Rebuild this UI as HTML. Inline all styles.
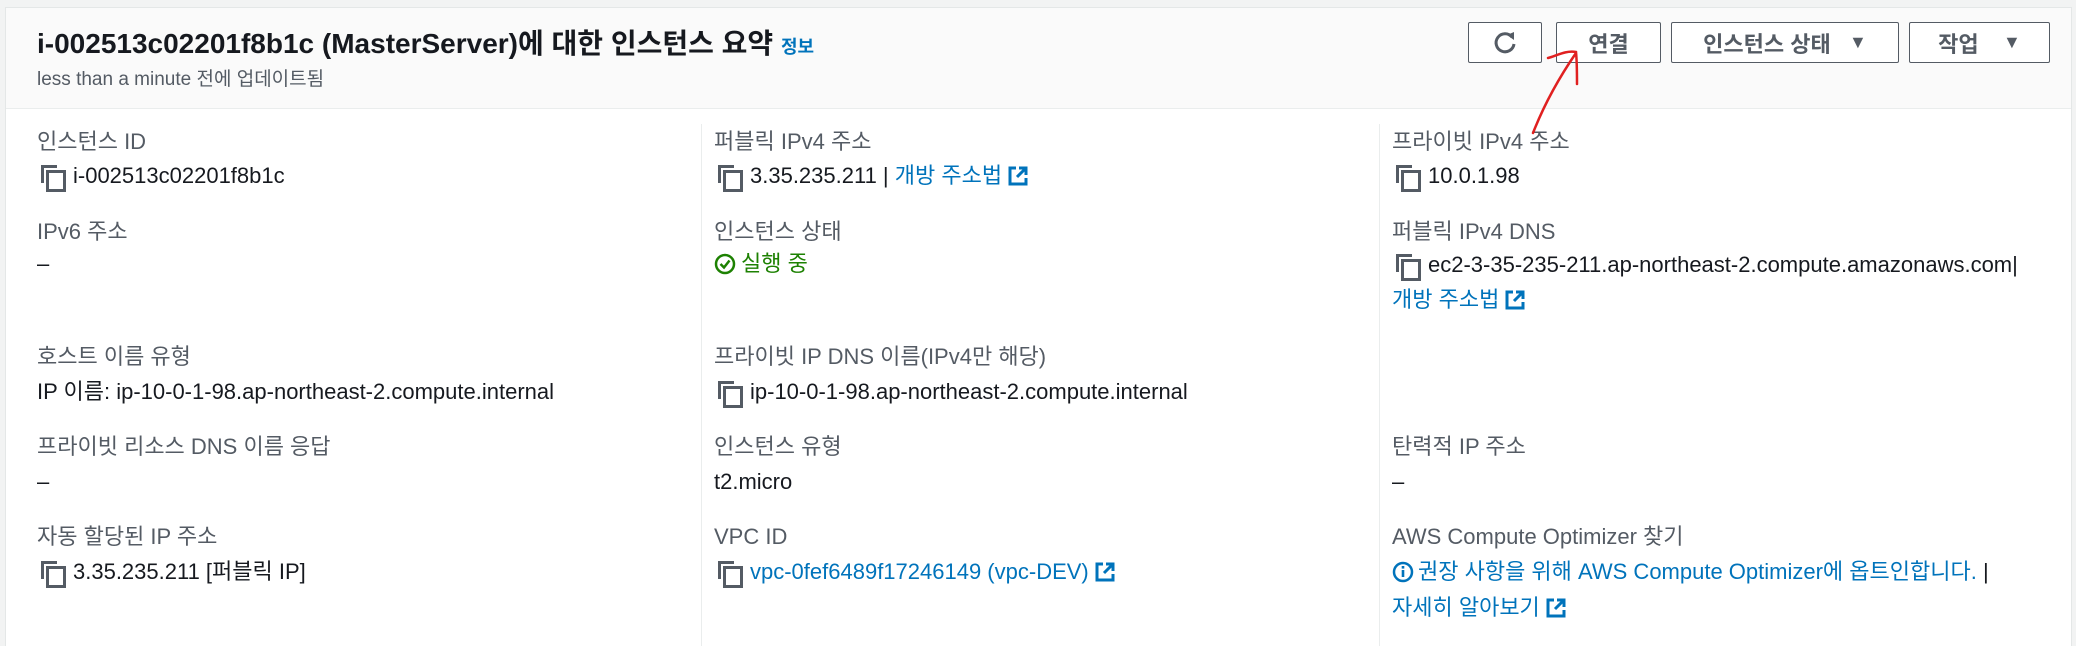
<!DOCTYPE html>
<html style="overflow:hidden;height:646px"><head><meta charset="utf-8"><style>
*{margin:0;padding:0;box-sizing:border-box}
body{width:2076px;height:646px;background:#f2f3f3;font-family:"Liberation Sans","Noto Sans CJK KR",sans-serif;position:relative;overflow:hidden;color:#16191f}
.card{position:absolute;left:5px;top:7px;width:2067px;height:639px;background:#fff;border:1px solid #e4e7e7;border-bottom:none;overflow:hidden}
.hdr{position:absolute;left:0;top:0;right:0;height:101px;background:#fafafa;border-bottom:1px solid #eaeded}
.t{position:absolute;font-size:22px;white-space:nowrap;line-height:26px}
.l{color:#545b64}
.a{color:#0073bb}
.g{color:#1d8102}
.vd{position:absolute;top:116px;width:1px;height:523px;background:#eaeded}
.btn{position:absolute;top:14px;height:41px;border:1px solid #545b64;border-radius:2px;background:#fff;font-size:22px;font-weight:bold;color:#545b64;display:flex;align-items:center;justify-content:center}
.cp{display:inline-block;position:relative;width:20px;height:22px;vertical-align:-4px;margin-right:12px}
.cp:before{content:"";position:absolute;left:0;top:0;width:13px;height:15px;border-left:3px solid #545b64;border-top:3px solid #545b64}
.cp:after{content:"";position:absolute;left:5px;top:5px;width:14px;height:16px;border:3px solid #545b64}
.ext{display:inline-block;vertical-align:-3px;margin-left:6px}
</style></head><body>
<div class="card">
<div class="hdr">
<div class="t" style="left:31px;top:20px;font-size:28px;line-height:32px;font-weight:bold">i-002513c02201f8b1c (MasterServer)에 대한 인스턴스 요약 <span class="a" style="font-size:18px">정보</span></div>
<div class="t" style="left:31px;top:59px;font-size:19px;color:#545b64">less than a minute 전에 업데이트됨</div>
<div class="btn" style="left:1462px;width:74px"><svg width="26" height="26" viewBox="0 0 26 26"><path d="M20 7A9 9 0 1 0 22 14" fill="none" stroke="#545b64" stroke-width="3"/><path d="M15 5L22 2L22 10Z" fill="#545b64"/></svg></div>
<div class="btn" style="left:1550px;width:105px">연결</div>
<div class="btn" style="left:1665px;width:228px">인스턴스 상태&nbsp;&nbsp;&nbsp;<span style="font-size:18px">▼</span></div>
<div class="btn" style="left:1903px;width:141px">작업&nbsp;&nbsp;&nbsp;&nbsp;<span style="font-size:18px">▼</span></div>
</div>
<div class="vd" style="left:695px"></div>
<div class="vd" style="left:1373px"></div>
</div>
<div class="t l" style="left:37px;top:129px">인스턴스 ID</div>
<div class="t" style="left:41px;top:163px"><span class="cp"></span>i-002513c02201f8b1c</div>
<div class="t l" style="left:37px;top:219px">IPv6 주소</div>
<div class="t" style="left:37px;top:251px">–</div>
<div class="t l" style="left:37px;top:344px">호스트 이름 유형</div>
<div class="t" style="left:37px;top:379px">IP 이름: ip-10-0-1-98.ap-northeast-2.compute.internal</div>
<div class="t l" style="left:37px;top:434px">프라이빗 리소스 DNS 이름 응답</div>
<div class="t" style="left:37px;top:469px">–</div>
<div class="t l" style="left:37px;top:524px">자동 할당된 IP 주소</div>
<div class="t" style="left:41px;top:559px"><span class="cp"></span>3.35.235.211 [퍼블릭 IP]</div>

<div class="t l" style="left:714px;top:129px">퍼블릭 IPv4 주소</div>
<div class="t" style="left:718px;top:163px"><span class="cp"></span>3.35.235.211 | <span class="a">개방 주소법<svg class="ext" width="20" height="20" viewBox="0 0 20 20"><path d="M8 2H2V18H18V12" fill="none" stroke="#0073bb" stroke-width="3"/><path d="M9 11L17 3M11 2H18V9" fill="none" stroke="#0073bb" stroke-width="3"/></svg></span></div>
<div class="t l" style="left:714px;top:219px">인스턴스 상태</div>
<div class="t g" style="left:714px;top:251px"><svg width="22" height="22" viewBox="0 0 22 22" style="vertical-align:-4px;margin-right:5px"><circle cx="11" cy="11" r="9" fill="none" stroke="#1d8102" stroke-width="2.5"/><path d="M6.5 11L10 14.5L15.5 7.5" fill="none" stroke="#1d8102" stroke-width="2.5"/></svg>실행 중</div>
<div class="t l" style="left:714px;top:344px">프라이빗 IP DNS 이름(IPv4만 해당)</div>
<div class="t" style="left:718px;top:379px"><span class="cp"></span>ip-10-0-1-98.ap-northeast-2.compute.internal</div>
<div class="t l" style="left:714px;top:434px">인스턴스 유형</div>
<div class="t" style="left:714px;top:469px">t2.micro</div>
<div class="t l" style="left:714px;top:524px">VPC ID</div>
<div class="t" style="left:718px;top:559px"><span class="cp"></span><span class="a">vpc-0fef6489f17246149 (vpc-DEV)<svg class="ext" width="20" height="20" viewBox="0 0 20 20"><path d="M8 2H2V18H18V12" fill="none" stroke="#0073bb" stroke-width="3"/><path d="M9 11L17 3M11 2H18V9" fill="none" stroke="#0073bb" stroke-width="3"/></svg></span></div>

<div class="t l" style="left:1392px;top:129px">프라이빗 IPv4 주소</div>
<div class="t" style="left:1396px;top:163px"><span class="cp"></span>10.0.1.98</div>
<div class="t l" style="left:1392px;top:219px">퍼블릭 IPv4 DNS</div>
<div class="t" style="left:1396px;top:252px"><span class="cp"></span>ec2-3-35-235-211.ap-northeast-2.compute.amazonaws.com|</div>
<div class="t a" style="left:1392px;top:287px">개방 주소법<svg class="ext" width="20" height="20" viewBox="0 0 20 20"><path d="M8 2H2V18H18V12" fill="none" stroke="#0073bb" stroke-width="3"/><path d="M9 11L17 3M11 2H18V9" fill="none" stroke="#0073bb" stroke-width="3"/></svg></div>
<div class="t l" style="left:1392px;top:434px">탄력적 IP 주소</div>
<div class="t" style="left:1392px;top:469px">–</div>
<div class="t l" style="left:1392px;top:524px">AWS Compute Optimizer 찾기</div>
<div class="t a" style="left:1392px;top:559px"><svg width="22" height="22" viewBox="0 0 22 22" style="vertical-align:-4px;margin-right:4px"><circle cx="11" cy="11" r="9" fill="none" stroke="#0073bb" stroke-width="2.5"/><rect x="9.7" y="9" width="2.6" height="7" fill="#0073bb"/><rect x="9.7" y="5" width="2.6" height="2.6" fill="#0073bb"/></svg>권장 사항을 위해 AWS Compute Optimizer에 옵트인합니다. <span style="color:#16191f">|</span></div>
<div class="t a" style="left:1392px;top:595px">자세히 알아보기<svg class="ext" width="20" height="20" viewBox="0 0 20 20"><path d="M8 2H2V18H18V12" fill="none" stroke="#0073bb" stroke-width="3"/><path d="M9 11L17 3M11 2H18V9" fill="none" stroke="#0073bb" stroke-width="3"/></svg></div>

<svg style="position:absolute;left:0;top:0" width="2076" height="646"><path d="M1533 133C1542 110 1554 85 1576 53M1548 58C1556 56 1566 50 1576 52C1577 62 1577 74 1577 84" fill="none" stroke="#e02020" stroke-width="2.5" stroke-linecap="round"/></svg>
</body></html>
